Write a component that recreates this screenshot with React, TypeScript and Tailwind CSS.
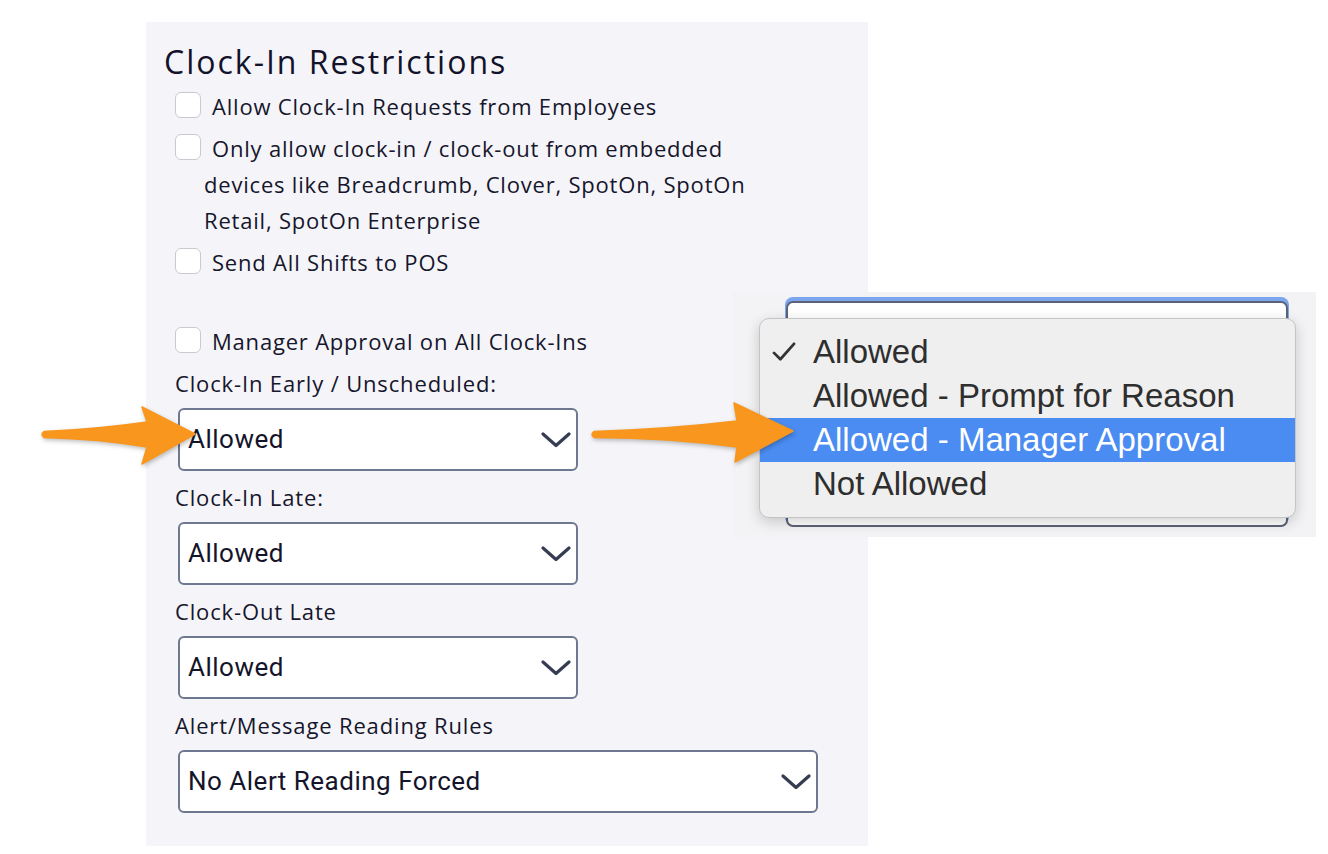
import React from "react";

const textFont = { fontFamily: '"Open Sans", "Noto Sans", sans-serif' };

const Chevron = ({ className = "" }: { className?: string }) => (
  <svg viewBox="0 0 30 16" className={className} fill="none">
    <path d="M2 2 L15 13.5 L28 2" stroke="#363d52" strokeWidth="3.2" strokeLinecap="round" strokeLinejoin="round" />
  </svg>
);

const Check = ({ label }: { label: string }) => (
  <div className="pl-[30px] -indent-[29px] leading-[36px] text-[22px] tracking-[0.8px] text-[#16162c]">
    <span className="inline-block w-[26px] h-[26px] align-[-3px] mr-[11px] bg-white border border-[#c9c9cf] rounded-[6px]" />
    {label}
  </div>
);

const Select = ({ value, wide = false }: { value: string; wide?: boolean }) => (
  <div
    className={`ml-[4px] mt-[7px] h-[63px] flex items-center justify-between pl-[8px] pr-[5px] bg-white border-2 border-[#6e7891] rounded-[6px] ${wide ? "w-[640px]" : "w-[400px]"}`}
  >
    <span className="text-[26px] tracking-[0.5px] text-[#14142a]" style={{ fontFamily: "Roboto, sans-serif" }}>
      {value}
    </span>
    <Chevron className="w-[30px] h-[16px]" />
  </div>
);

const FieldLabel = ({ children }: { children: React.ReactNode }) => (
  <div className="mt-2 pl-[1px] leading-[36px] text-[22px] tracking-[0.85px] text-[#16162c]">{children}</div>
);

const menuItems = ["Allowed", "Allowed - Prompt for Reason", "Allowed - Manager Approval", "Not Allowed"];

export default function App() {
  return (
    <div className="relative w-[1328px] h-[854px] bg-white overflow-hidden" style={textFont}>
      <div className="ml-[146px] pt-[22px]">
        <div className="w-[722px] h-[824px] bg-[#f5f5f9] pl-[18px] pt-[20px]">
          <h2 className="leading-[40px] text-[32px] tracking-[2px] font-medium text-[#12122a]">Clock-In Restrictions</h2>
          <div className="pl-[10px] mt-[6px] flex flex-col">
            <div className="flex flex-col gap-[6px] w-[590px]">
              <Check label="Allow Clock-In Requests from Employees" />
              <Check label="Only allow clock-in / clock-out from embedded devices like Breadcrumb, Clover, SpotOn, SpotOn Retail, SpotOn Enterprise" />
              <Check label="Send All Shifts to POS" />
              <div className="mt-[37px]">
                <Check label="Manager Approval on All Clock-Ins" />
              </div>
            </div>
            <div className="-mt-[2px]">
              <FieldLabel>Clock-In Early / Unscheduled:</FieldLabel>
              <Select value="Allowed" />
              <FieldLabel>Clock-In Late:</FieldLabel>
              <Select value="Allowed" />
              <FieldLabel>Clock-Out Late</FieldLabel>
              <Select value="Allowed" />
              <FieldLabel>Alert/Message Reading Rules</FieldLabel>
              <Select value="No Alert Reading Forced" wide />
            </div>
          </div>
        </div>
      </div>

      {/* zoomed dropdown screenshot */}
      <div className="absolute left-[733px] top-[292px] w-[583px] h-[245px] bg-[#f3f3f5]">
        <div className="absolute left-[53px] top-[9px] w-[502px] h-[226px] bg-white border-2 border-[#5c6376] rounded-[7px] shadow-[0_-3px_0_1px_#7ba5ef]" />
        <div
          className="absolute left-[26px] top-[26px] w-[537px] h-[200px] bg-[#efefef] border border-[#c4c4c4] rounded-[10px] shadow-[0_4px_14px_rgba(0,0,0,0.18)] pt-[11px]"
          style={{ fontFamily: '"Liberation Sans", Arial, sans-serif' }}
        >
          {menuItems.map((item, i) => (
            <div
              key={item}
              className={`relative h-[44px] flex items-center pl-[53px] text-[33px] ${i === 2 ? "bg-[#4a8cf1] text-white" : "text-[#2e2e2e]"}`}
            >
              {i === 0 && (
                <svg viewBox="0 0 26 22" className="absolute left-[12px] top-[12px] w-[24px] h-[20px]" fill="none">
                  <path d="M2 12 L9 19 L24 2" stroke="#333" strokeWidth="3" strokeLinecap="round" strokeLinejoin="round" />
                </svg>
              )}
              {item}
            </div>
          ))}
        </div>
      </div>

      {/* annotation arrows */}
      <svg
        className="absolute left-0 top-0 w-[1328px] h-[854px] pointer-events-none drop-shadow-[1px_2px_2px_rgba(0,0,0,0.25)]"
        viewBox="0 0 1328 854"
      >
        <path
          d="M44 431.5 Q 100 429 147 422 L 142 407 L 195 434 L 142 464 L 147 447 Q 100 439 44 437.5 Q 40 434.5 44 431.5 Z"
          fill="#f8961e"
          stroke="#f8961e"
          strokeWidth="1.5"
          strokeLinejoin="round"
        />
        <path
          d="M594 431.5 Q 670 429 737 421 L 734 403 L 793 431 L 735 462 L 737 447 Q 670 438 594 437.5 Q 590 434.5 594 431.5 Z"
          fill="#f8961e"
          stroke="#f8961e"
          strokeWidth="1.5"
          strokeLinejoin="round"
        />
      </svg>
    </div>
  );
}
